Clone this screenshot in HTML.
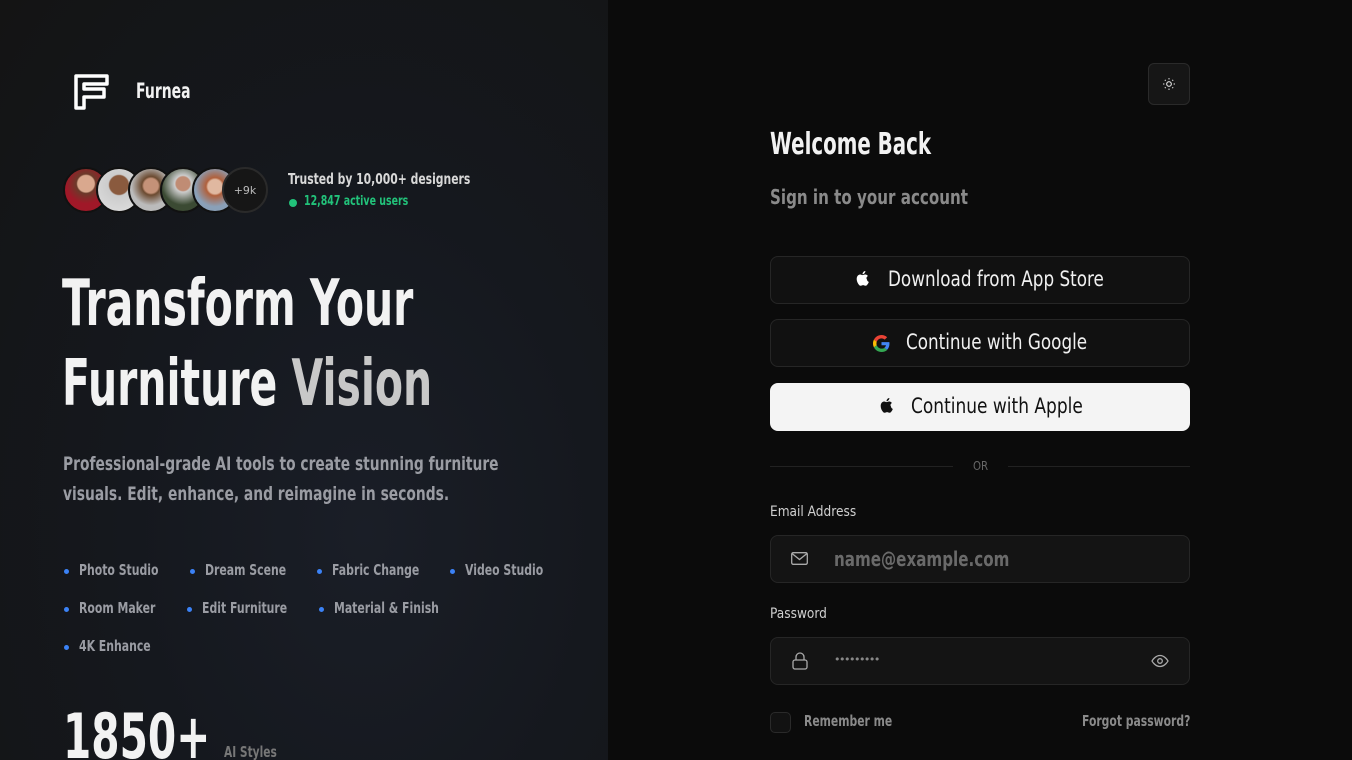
<!DOCTYPE html>
<html><head><meta charset="utf-8"><style>
*{margin:0;padding:0;box-sizing:border-box}
html,body{width:1352px;height:760px;overflow:hidden}
body{background:#0b0b0b;font-family:"DejaVu Sans","Liberation Sans",sans-serif;color:#f2f2f2;position:relative}
.left{position:absolute;left:0;top:0;width:608px;height:760px;background:radial-gradient(ellipse at 60% 70%,#1a1e27 0%,#15181e 45%,#141414 100%);overflow:hidden}
.a{position:absolute;white-space:nowrap;transform-origin:0 0}
.av{position:absolute;top:167px;width:46px;height:46px;border-radius:50%;border:2px solid #111;}
.btn{position:absolute;left:770px;width:420px;height:48px;border-radius:8px;border:1px solid #262626;background:#111}
.bt{position:absolute;font-size:21px;color:#f0f0f0;white-space:nowrap;transform-origin:0 0;transform:scaleX(.8)}
.inp{position:absolute;left:770px;width:420px;height:48px;border-radius:8px;border:1px solid #262626;background:#141414}
.f{position:absolute;font-size:15px;font-weight:bold;color:#9a9ca3;white-space:nowrap}
.f span{display:inline-block;transform:scaleX(.726);transform-origin:0 0}
.f:before{content:"";position:absolute;left:-15px;top:8px;width:5px;height:5px;border-radius:50%;background:#3b82f6}
</style></head><body>
<div class="left">
<svg class="a" style="left:72px;top:72px" width="40" height="40" viewBox="0 0 40 40"><path d="M4 4h31v8H12v5h20v8H12v11H4z" fill="none" stroke="#fff" stroke-width="3.5" stroke-linejoin="round"/></svg>
<div class="a" style="left:136px;top:79px;font-size:21px;font-weight:bold;transform:scaleX(.666)">Furnea</div>
<div class="av" style="left:63px;background:radial-gradient(circle at 50% 35%,#d9a88e 0 24%,#6b3a2a 28%,#a01828 58%)"></div>
<div class="av" style="left:96px;background:radial-gradient(circle at 50% 38%,#8a5a3e 0 28%,#ccc 32%,#e0e0e0)"></div>
<div class="av" style="left:128px;background:radial-gradient(circle at 50% 40%,#c49278 0 22%,#6b4a30 28%,#bbb 60%)"></div>
<div class="av" style="left:160px;background:radial-gradient(circle at 50% 35%,#c08c74 0 20%,#ccc 24%,#3b4a33 62%)"></div>
<div class="av" style="left:192px;background:radial-gradient(circle at 50% 42%,#e0b8a0 0 22%,#b0603c 28%,#8aa0b8 62%)"></div>
<div class="av" style="left:222px;background:#161616;border-color:#2a2a2a;font-size:11px;color:#bbb;display:flex;align-items:center;justify-content:center">+9k</div>
<div class="a" style="left:288px;top:170px;font-size:15px;font-weight:bold;color:#d8d8d8;transform:scaleX(.72)">Trusted by 10,000+ designers</div>
<div class="a" style="left:289px;top:199px;width:8px;height:8px;border-radius:50%;background:#22c27a"></div>
<div class="a" style="left:304px;top:194px;font-size:13px;font-weight:bold;color:#22c27a;transform:scaleX(.726)">12,847 active users</div>
<div class="a" style="left:62px;top:264px;font-size:64px;font-weight:bold;line-height:80px;transform:scaleX(.64)">Transform Your<br>Furniture <span style="color:#c8c8c8">Vision</span></div>
<div class="a" style="left:63px;top:449px;font-size:19px;font-weight:bold;color:#9a9ca3;line-height:30px;transform:scaleX(.728)">Professional-grade AI tools to create stunning furniture<br>visuals. Edit, enhance, and reimagine in seconds.</div>
<div class="f" style="left:79px;top:561px"><span>Photo Studio</span></div>
<div class="f" style="left:205px;top:561px"><span>Dream Scene</span></div>
<div class="f" style="left:332px;top:561px"><span>Fabric Change</span></div>
<div class="f" style="left:465px;top:561px"><span>Video Studio</span></div>
<div class="f" style="left:79px;top:599px"><span>Room Maker</span></div>
<div class="f" style="left:202px;top:599px"><span>Edit Furniture</span></div>
<div class="f" style="left:334px;top:599px"><span>Material &amp; Finish</span></div>
<div class="f" style="left:79px;top:637px"><span>4K Enhance</span></div>
<div class="a" style="left:63px;top:700px;font-size:62px;font-weight:bold;color:#f2f2f2;transform:scaleX(.656)">1850+</div>
<div class="a" style="left:224px;top:743px;font-size:15px;font-weight:bold;color:#777;transform:scaleX(.71)">AI Styles</div>
</div>

<div class="a" style="left:1148px;top:63px;width:42px;height:42px;border-radius:6px;border:1px solid #2a2a2a;background:#161616;display:flex;align-items:center;justify-content:center"><svg width="14" height="14" viewBox="0 0 24 24" fill="none" stroke="#ddd" stroke-width="2"><circle cx="12" cy="12" r="4"/><path d="M12 2v2M12 20v2M2 12h2M20 12h2M4.9 4.9l1.4 1.4M17.7 17.7l1.4 1.4M4.9 19.1l1.4-1.4M17.7 6.3l1.4-1.4"/></svg></div>
<div class="a" style="left:770px;top:127px;font-size:30px;font-weight:bold;transform:scaleX(.66)">Welcome Back</div>
<div class="a" style="left:770px;top:185px;font-size:20px;font-weight:bold;color:#8a8a8a;transform:scaleX(.756)">Sign in to your account</div>

<div class="btn" style="top:256px"></div>
<svg class="a" style="left:856px;top:271px" width="14" height="16" viewBox="0 0 14 16"><path d="M11.500 8.500c0-2 1.600-2.900 1.700-3-1-1.400-2.400-1.600-2.900-1.600-1.200-.1-2.400.7-3 .7S5.700 3.900 4.700 3.900C3.400 3.900 2.200 4.700 1.500 5.900 0 8.500 1.100 12.300 2.600 14.400c.7 1 1.500 2.100 2.600 2 1 0 1.400-.7 2.700-.7s1.600.7 2.700.7c1.100 0 1.800-1 2.500-2 .8-1.100 1.100-2.200 1.100-2.300 0 0-2.200-.8-2.200-3.600zM9.500 2.400C10.100 1.700 10.500.8 10.400 0 9.600 0 8.700.5 8.100 1.200c-.5.6-1 1.500-.8 2.400.9.1 1.700-.5 2.200-1.200z" fill="#fff" transform="scale(.9)"/></svg>
<div class="bt" style="left:888px;top:267px">Download from App Store</div>

<div class="btn" style="top:319px"></div>
<svg class="a" style="left:873px;top:335px" width="17" height="17" viewBox="0 0 48 48"><path fill="#EA4335" d="M24 9.5c3.5 0 6.6 1.2 9.1 3.6l6.8-6.8C35.800 2.400 30.300 0 24 0 14.600 0 6.600 5.400 2.700 13.200l7.900 6.200C12.500 13.600 17.800 9.500 24 9.500z"/><path fill="#4285F4" d="M46.500 24.500c0-1.600-.1-3.100-.4-4.500H24v9h12.700c-.6 2.900-2.200 5.400-4.700 7.100l7.600 5.900c4.400-4.100 6.900-10.100 6.900-17.500z"/><path fill="#FBBC05" d="M10.500 28.600c-.5-1.400-.8-3-.8-4.600s.3-3.200.8-4.600l-7.900-6.200C1 16.500 0 20.100 0 24s.9 7.500 2.700 10.800l7.800-6.200z"/><path fill="#34A853" d="M24 48c6.500 0 11.900-2.100 15.900-5.800l-7.600-5.900c-2.100 1.400-4.900 2.300-8.300 2.300-6.200 0-11.500-4.200-13.400-9.900l-7.900 6.200C6.600 42.600 14.600 48 24 48z"/></svg>
<div class="bt" style="left:906px;top:330px">Continue with Google</div>

<div class="btn" style="top:383px;background:#f4f4f4;border-color:#f4f4f4"></div>
<svg class="a" style="left:880px;top:398px" width="14" height="16" viewBox="0 0 14 16"><path d="M11.500 8.500c0-2 1.600-2.900 1.700-3-1-1.400-2.400-1.600-2.900-1.600-1.200-.1-2.400.7-3 .7S5.700 3.900 4.700 3.900C3.400 3.900 2.200 4.700 1.500 5.900 0 8.500 1.100 12.300 2.600 14.400c.7 1 1.500 2.100 2.600 2 1 0 1.400-.7 2.700-.7s1.600.7 2.700.7c1.100 0 1.800-1 2.500-2 .8-1.100 1.100-2.200 1.100-2.300 0 0-2.200-.8-2.200-3.600zM9.500 2.400C10.100 1.700 10.500.8 10.400 0 9.600 0 8.700.5 8.100 1.200c-.5.6-1 1.500-.8 2.400.9.1 1.700-.5 2.200-1.200z" fill="#111" transform="scale(.9)"/></svg>
<div class="bt" style="left:911px;top:394px;color:#111;transform:scaleX(.81)">Continue with Apple</div>

<div class="a" style="left:770px;top:466px;width:183px;height:1px;background:#222"></div>
<div class="a" style="left:1008px;top:466px;width:182px;height:1px;background:#222"></div>
<div class="a" style="left:973px;top:459px;font-size:12px;color:#666;transform:scaleX(.85)">OR</div>
<div class="a" style="left:770px;top:504px;font-size:14px;color:#d0d0d0;transform:scaleX(.87)">Email Address</div>
<div class="inp" style="top:535px"></div>
<svg class="a" style="left:791px;top:552px" width="17" height="13" viewBox="0 0 17 13" fill="none" stroke="#aaa" stroke-width="1.3"><rect x=".7" y=".7" width="15.6" height="11.6" rx="1.5"/><path d="M1 1.500l7.500 6 7.500-6"/></svg>
<div class="a" style="left:834px;top:547px;font-size:20px;font-weight:bold;color:#6a6a6a;transform:scaleX(.757)">name@example.com</div>
<div class="a" style="left:770px;top:606px;font-size:14px;color:#d0d0d0;transform:scaleX(.87)">Password</div>
<div class="inp" style="top:637px"></div>
<svg class="a" style="left:792px;top:652px" width="16" height="18" viewBox="0 0 16 18" fill="none" stroke="#aaa" stroke-width="1.3"><rect x="1" y="8" width="14" height="9" rx="2"/><path d="M4 8V5a4 4 0 018 0v3"/></svg>
<div class="a" style="left:834px;top:653px;font-size:11px;color:#888;letter-spacing:-1.5px">•••••••••</div>
<svg class="a" style="left:1151px;top:654px" width="18" height="14" viewBox="0 0 18 14" fill="none" stroke="#aaa" stroke-width="1.3"><path d="M1 7s3-5.500 8-5.500S17 7 17 7s-3 5.500-8 5.500S1 7 1 7z"/><circle cx="9" cy="7" r="2.300"/></svg>
<div class="a" style="left:770px;top:712px;width:21px;height:21px;border-radius:5px;border:1px solid #2a2a2a;background:#121212"></div>
<div class="a" style="left:804px;top:712px;font-size:15px;font-weight:bold;color:#8a8a8a;transform:scaleX(.72)">Remember me</div>
<div class="a" style="left:1082px;top:712px;font-size:15px;font-weight:bold;color:#8a8a8a;transform:scaleX(.72)">Forgot password?</div>
</body></html>
